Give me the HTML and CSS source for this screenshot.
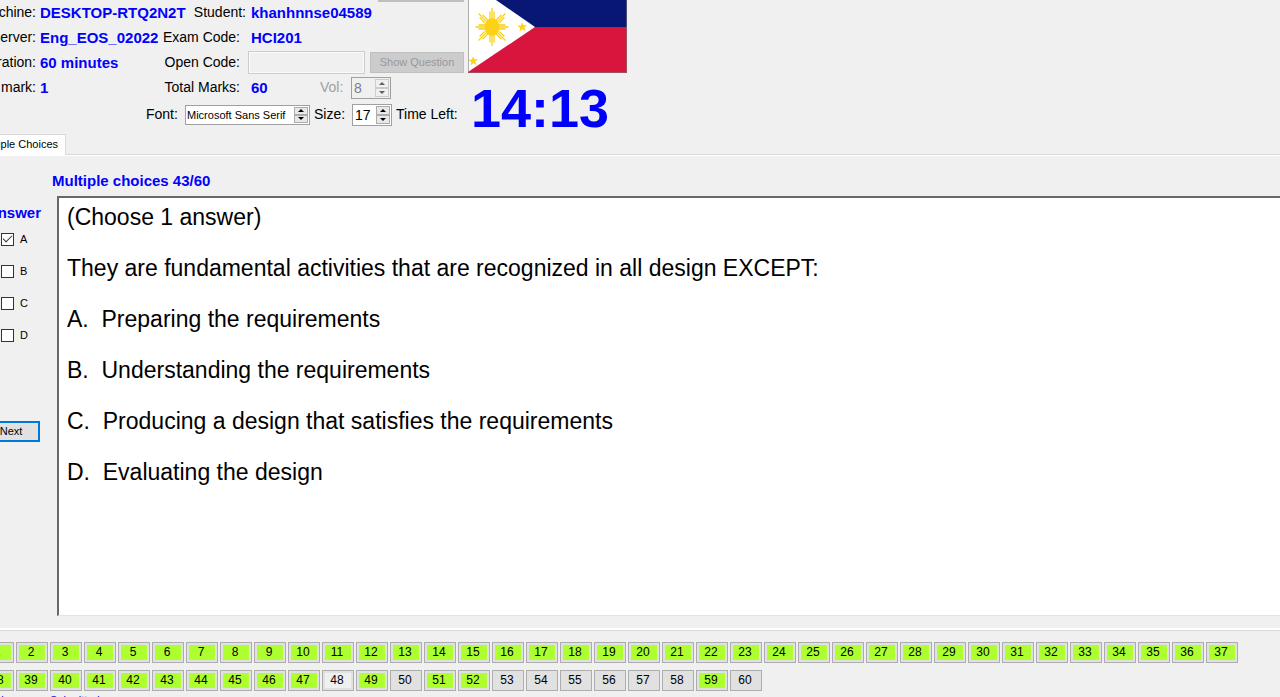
FILE: index.html
```html
<!DOCTYPE html>
<html lang="en">
<head>
<meta charset="utf-8">
<title>Exam client</title>
<link rel="stylesheet" href="styles.css">
</head>
<body>
<main class="app">
  <header class="top">
    <div class="info">
      <dl class="session">
        <dt>Machine:</dt><dd>DESKTOP-RTQ2N2T</dd>
        <dt>Server:</dt><dd>Eng_EOS_02022</dd>
        <dt>Duration:</dt><dd>60 minutes</dd>
        <dt>Q mark:</dt><dd>1</dd>
      </dl>
      <div class="exam">
        <span class="label student">Student:</span><b class="value">khanhnnse04589</b>
        <span class="label">Exam Code:</span><b class="value">HCI201</b>
        <label class="label" for="code">Open Code:</label>
        <div class="open"><input class="code" id="code" type="text" disabled><button class="show" disabled>Show Question</button></div>
        <span class="label">Total Marks:</span>
        <div class="marks"><b class="total">60</b><label class="dim" for="vol">Vol:</label>
          <span class="spin spin-off"><input id="vol" type="text" value="8" disabled><span class="arrows"><button disabled aria-label="Volume up"></button><button disabled aria-label="Volume down"></button></span></span></div>
      </div>
      <div class="fonts">
        <label class="font-label" for="font">Font:</label>
        <span class="spin spin-font"><input id="font" type="text" value="Microsoft Sans Serif"><span class="arrows"><button aria-label="Previous font"></button><button aria-label="Next font"></button></span></span>
        <label class="size-label" for="size">Size:</label>
        <span class="spin"><input id="size" type="text" value="17"><span class="arrows"><button aria-label="Larger"></button><button aria-label="Smaller"></button></span></span>
        <span>Time Left:</span>
      </div>
      <div class="strip"></div>
    </div>
    <div class="side">
      <svg class="flag" viewBox="0 0 159 73" role="img" aria-label="Flag">
        <path fill="#081773" d="M0 0h159v27H0z"/><path fill="#d8163d" d="M0 27h159v46H0z"/>
        <path fill="#fff" d="M0 0h28L67 27 0 72z"/>
        <g fill="#fcd116">
          <g transform="translate(24 27)">
            <ellipse rx="7.500" ry="9"/>
            <path id="ray" fill="none" stroke="#fcd116" stroke-width="1.300" d="M0-8v-11M-2-8v-7.500M2-8v-7.500"/>
            <use href="#ray" transform="rotate(45)"/><use href="#ray" transform="rotate(90) scale(1 .87)"/><use href="#ray" transform="rotate(135)"/><use href="#ray" transform="rotate(180)"/><use href="#ray" transform="rotate(225)"/><use href="#ray" transform="rotate(270) scale(1 .87)"/><use href="#ray" transform="rotate(315)"/>
          </g>
          <path id="star" d="M54 22l1.300 3.300 3.700-.2-2.700 2.500 1.400 3.500-3.200-1.900-3 2.300.8-3.600-3-2.200 3.700-.3z"/>
          <use href="#star" transform="translate(-49 34)"/>
        </g>
        <path fill="none" stroke="#777" stroke-opacity=".6" d="M.5 0v72.500h158V0"/>
      </svg>
      <time class="clock">14:13</time>
    </div>
  </header>

  <nav class="tabs"><button class="tab">Multiple Choices</button></nav>

  <section class="panel">
    <h1 class="title">Multiple choices 43/60</h1>
    <div class="work">
      <fieldset class="answers">
        <legend>Answer</legend>
        <label><input type="checkbox" checked>A</label>
        <label><input type="checkbox">B</label>
        <label><input type="checkbox">C</label>
        <label><input type="checkbox">D</label>
        <button class="next">Next</button>
      </fieldset>
      <article class="question">
        <p>(Choose 1 answer)</p>
        <p>They are fundamental activities that are recognized in all design EXCEPT:</p>
        <p>A.&nbsp; Preparing the requirements</p>
        <p>B.&nbsp; Understanding the requirements</p>
        <p>C.&nbsp; Producing a design that satisfies the requirements</p>
        <p>D.&nbsp; Evaluating the design</p>
      </article>
    </div>
  </section>

  <nav class="numbers" id="numbers" aria-label="Questions"></nav>
  <footer class="status"><span>Main</span><span>Submitted</span></footer>
</main>
<script src="app.js"></script>
</body>
</html>
```
FILE: app.js
```js
const open = [50, 53, 54, 55, 56, 57, 58, 60];
const nav = document.getElementById("numbers");
for (let n = 1; n <= 60; n++) {
  const button = document.createElement("button");
  button.textContent = n;
  button.className = open.includes(n) ? "num" : n === 48 ? "num seen" : "num done";
  nav.append(button);
}
```
FILE: styles.css
```css
* { box-sizing: border-box; }
body {
  margin: 0;
  height: 100vh;
  overflow: hidden;
  background: #f0f0f0;
  color: #000;
  font: 14px/25px "Liberation Sans", Arial, sans-serif;
}
button, input { font: inherit; color: inherit; margin: 0; padding: 0; border-radius: 0; }
.app { margin-left: -18px; display: flex; flex-direction: column; }
.top { display: flex; height: 134px; }
.info {
  position: relative;
  width: 486px;
  display: grid;
  grid-template-columns: 180px 1fr;
  grid-template-rows: 100px 29px;
}
.session {
  margin: 0;
  display: grid;
  grid-template-columns: 54px 126px;
  grid-auto-rows: 25px;
  column-gap: 4px;
  white-space: nowrap;
}
.session dt { justify-self: end; }
.session dd { margin: 0; color: #00f; font-weight: bold; font-size: 15px; }
.exam {
  display: grid;
  grid-template-columns: 78px 1fr;
  grid-auto-rows: 25px;
  column-gap: 8px;
}
.label { justify-self: end; white-space: nowrap; }
.student { margin-right: -6px; }
.value, .total { color: #00f; font-size: 15px; padding-left: 3px; }
.open { display: flex; align-items: center; gap: 5px; }
.code { width: 117px; height: 23px; border: 1px solid #ccc; background: #f0f0f0; box-shadow: inset 0 0 0 1px #fafafa; }
.show { width: 94px; height: 21px; border: 1px solid #bfbfbf; background: #ccc; color: #999; font-size: 11px; line-height: 19px; }
.marks { display: flex; align-items: center; }
.total { width: 72px; }
.dim { width: 31px; color: #a0a0a0; }
.fonts { grid-column: 1 / 3; display: flex; align-items: center; gap: 4px; padding-left: 164px; white-space: nowrap; }
.font-label { width: 35px; }
.size-label { width: 34px; }
.spin { display: flex; width: 40px; height: 22px; padding: 1px; border: 1px solid #a0a0a0; background: #fff; }
.spin input { flex: 1; min-width: 0; border: 0; padding-left: 1px; background: transparent; outline: 0; line-height: 18px; }
.spin-font { width: 125px; height: 20px; }
.spin-font input { padding-left: 0; font-size: 11px; line-height: 16px; }
.spin-off { background: #f0f0f0; color: #808080; }
.arrows { display: flex; flex-direction: column; width: 14px; }
.arrows button { flex: 1; display: flex; align-items: center; justify-content: center; border: 1px solid #acacac; background: #e8e8e8; }
.arrows button::before { content: ""; border: 3px solid transparent; border-top-width: 0; border-bottom-color: #000; }
.arrows button:last-child::before { border-width: 3px 3px 0; border-color: #000 transparent transparent; }
.spin-off .arrows button { border-color: #ccc; background: #f0f0f0; }
.spin-off .arrows button::before { border-bottom-color: #606060; }
.spin-off .arrows button:last-child::before { border-color: #606060 transparent transparent; }
.strip { position: absolute; top: 0; right: 4px; width: 86px; height: 2px; background: #bfbfbf; }
.side { width: 159px; }
.flag { display: block; width: 159px; height: 73px; }
.clock { display: block; padding-left: 3px; color: #00f; font-size: 54px; font-weight: bold; line-height: 71px; }
.tabs { height: 21px; border-bottom: 1px solid #d9d9d9; }
.tab { display: flex; justify-content: flex-end; width: 84px; height: 21px; padding-right: 7px; border: 1px solid #d9d9d9; border-bottom: 0; background: #fff; font-size: 11px; line-height: 18px; white-space: nowrap; }
.panel { height: 476px; padding-top: 12px; border-top: 1px solid #fff; border-bottom: 1px solid #d9d9d9; box-shadow: inset 0 -2px #fff; }
.title { margin: 0; padding-left: 70px; color: #00f; font-size: 15px; line-height: 25px; }
.work { display: flex; height: 420px; margin-top: 3px; }
.answers { width: 75px; margin: 0; padding: 0; border: 0; font-size: 11px; display: flex; flex-direction: column; }
.answers legend { float: left; width: 59px; padding: 6px 0 0; text-align: right; color: #00f; font-size: 15px; font-weight: bold; line-height: 21px; }
.answers label { display: flex; align-items: center; gap: 6px; height: 32px; padding-left: 19px; }
.answers input { appearance: none; width: 13px; height: 13px; border: 1px solid #333; background: #fff; }
.answers input:checked { display: grid; place-items: center; }
.answers input:checked::before { content: ""; width: 8px; height: 4px; border: solid #333; border-width: 0 0 1px 1px; transform: rotate(-45deg); margin-bottom: 3px; }
.next { width: 58px; height: 21px; margin-top: 70px; border: 2px solid #0078d7; background: #e1e1e1; font-size: 11px; line-height: 17px; }
.question { flex: 1; border: solid #696969; border-width: 2px 0 1px 2px; border-bottom-color: #e3e3e3; background: #fff; padding: 6px 8px; font-size: 23px; line-height: 26px; }
.question p { margin: 0 0 25px; }
.numbers { display: grid; grid-template-columns: repeat(37, 32px); grid-auto-rows: 21px; gap: 7px 2px; padding-top: 11px; }
.num { border: 1px solid #adadad; background: #e1e1e1; font-size: 12px; line-height: 19px; padding: 0 2px 0 0; }
.num.done { box-shadow: inset 0 0 0 2px #e1e1e1; background: #adff2f; }
.num.seen { box-shadow: inset 0 0 0 2px #e1e1e1; background: #f0f0f0; }
.status { display: flex; padding-top: 3px; color: #00f; font-size: 11px; line-height: 13px; }
.status span:first-child { width: 68px; padding-left: 4px; }
```
